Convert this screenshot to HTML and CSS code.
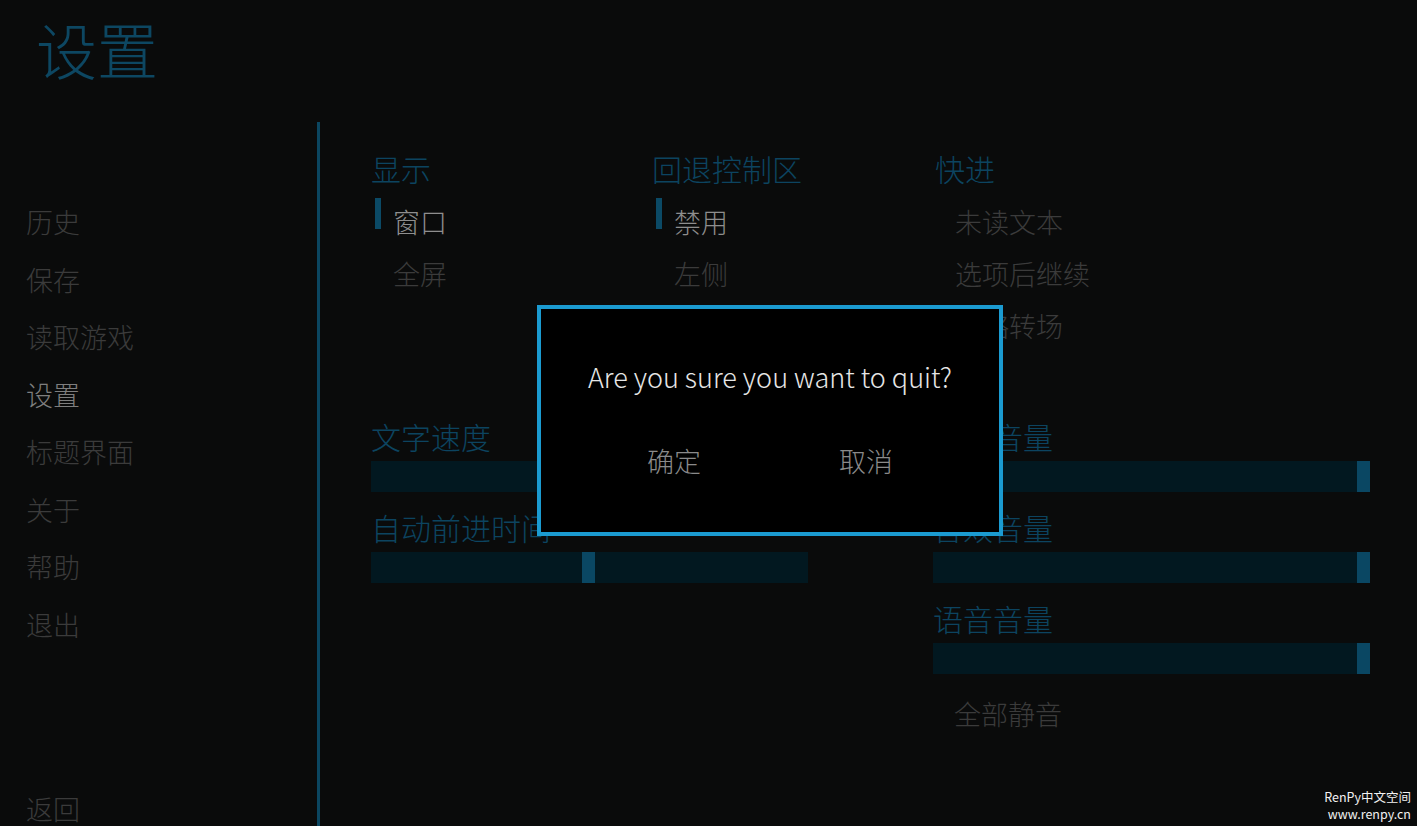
FILE: index.html
```html
<!DOCTYPE html>
<html lang="zh-CN">
<head>
    <meta charset="UTF-8">
    <meta name="viewport" content="width=device-width, initial-scale=1.0">
    <title>设置</title>
    <link rel="stylesheet" href="styles.css">
</head>
<body>
    <div class="screen">
        <h1 class="title">设置</h1>

        <div class="main">
            <nav class="nav">
                <div class="nav-item">历史</div>
                <div class="nav-item">保存</div>
                <div class="nav-item">读取游戏</div>
                <div class="nav-item active">设置</div>
                <div class="nav-item">标题界面</div>
                <div class="nav-item">关于</div>
                <div class="nav-item">帮助</div>
                <div class="nav-item">退出</div>
                <div class="nav-item back">返回</div>
            </nav>

            <section class="content">
                <div class="options">
                    <div class="group">
                        <div class="label">显示</div>
                        <div class="radio selected">窗口</div>
                        <div class="radio">全屏</div>
                    </div>
                    <div class="group">
                        <div class="label">回退控制区</div>
                        <div class="radio selected">禁用</div>
                        <div class="radio">左侧</div>
                    </div>
                    <div class="group check">
                        <div class="label">快进</div>
                        <div class="radio">未读文本</div>
                        <div class="radio">选项后继续</div>
                        <div class="radio">忽略转场</div>
                    </div>
                </div>

                <div class="sliders">
                    <div class="slider-col">
                        <div class="label">文字速度</div>
                        <div class="bar"><span class="fill" style="width: 330px"></span><span class="thumb"></span></div>
                        <div class="label">自动前进时间</div>
                        <div class="bar"><span class="fill" style="width: 211px"></span><span class="thumb"></span></div>
                    </div>
                    <div class="slider-col">
                        <div class="label">音乐音量</div>
                        <div class="bar"><span class="fill" style="width: 424px"></span><span class="thumb"></span></div>
                        <div class="label">音效音量</div>
                        <div class="bar"><span class="fill" style="width: 424px"></span><span class="thumb"></span></div>
                        <div class="label">语音音量</div>
                        <div class="bar"><span class="fill" style="width: 424px"></span><span class="thumb"></span></div>
                        <div class="radio mute">全部静音</div>
                    </div>
                </div>
            </section>
        </div>

        <!-- confirm dialog, drawn over the dimmed menu -->
        <div class="confirm">
            <p class="confirm-text">Are you sure you want to quit?</p>
            <div class="confirm-buttons">
                <span class="confirm-btn">确定</span>
                <span class="confirm-btn">取消</span>
            </div>
        </div>

        <div class="watermark">
            <div>RenPy中文空间</div>
            <div>www.renpy.cn</div>
        </div>
    </div>
</body>
</html>
```

FILE: styles.css
```css
html, body {
    margin: 0;
    padding: 0;
    background-color: #0a0b0b;
    overflow: hidden;
}
.screen {
    position: relative;
    width: 1417px;
    height: 826px;
    font-family: "Noto Sans CJK SC", "Noto Sans", sans-serif;
    font-weight: 300;
    color: #3b3b3b;
}
.title {
    margin: 0;
    height: 122px;
    padding: 18px 0 0 36px;
    box-sizing: border-box;
    font-size: 61px;
    line-height: 62px;
    font-weight: 300;
    color: #0d4762;
}
.main {
    display: flex;
    height: 704px;
}
.nav {
    width: 320px;
    border-right: 3px solid #0b4660;
    padding: 71px 0 0 26px;
    box-sizing: border-box;
}
.nav-item {
    font-size: 27px;
    line-height: 57.5px;
    height: 57.5px;
}
.nav-item.active {
    color: #7e7e7e;
}
.nav-item.back {
    margin-top: 126.5px;
}
.content {
    flex: 1;
    padding: 25px 0 0 51px;
}
.options {
    display: grid;
    grid-template-columns: 281px 283px 1fr;
}
.label {
    font-size: 30px;
    line-height: 42px;
    height: 46px;
    color: #0c4460;
}
.radio {
    position: relative;
    font-size: 27px;
    line-height: 52px;
    height: 52px;
    padding-left: 22px;
}
.group .label {
    margin-bottom: 3px;
}
.group.check .radio {
    padding-left: 20px;
}
.radio.selected {
    color: #8e8e8e;
}
.radio.selected::before {
    content: "";
    position: absolute;
    left: 4px;
    top: 2px;
    width: 6px;
    height: 31px;
    background-color: #0b4a66;
}
.sliders {
    display: grid;
    grid-template-columns: 437px 437px;
    column-gap: 125px;
    margin-top: 63px;
}
.slider-col .label ~ .label {
    margin-top: 14px;
}
.bar {
    display: flex;
    height: 31px;
    background-color: #021820;
}
.fill {
    flex: none;
}
.thumb {
    flex: none;
    width: 13px;
    background-color: #0a4763;
}
.mute {
    margin-top: 14px;
    padding-left: 21px;
}
.confirm {
    position: absolute;
    left: 537px;
    top: 305px;
    width: 466px;
    height: 231px;
    box-sizing: border-box;
    border: 4px solid #1b9bd1;
    background-color: #000;
    text-align: center;
}
.confirm-text {
    margin: 48px 0 0;
    font-size: 27px;
    line-height: 40px;
    color: #e6e6e6;
}
.confirm-buttons {
    display: flex;
    justify-content: center;
    gap: 138px;
    margin-top: 44px;
}
.confirm-btn {
    font-size: 27px;
    line-height: 40px;
    color: #8a8a8a;
}
.watermark {
    position: absolute;
    right: 6px;
    bottom: 4px;
    text-align: right;
    font-size: 12.5px;
    line-height: 17px;
    font-weight: 400;
    color: #f2f2f2;
}
```
